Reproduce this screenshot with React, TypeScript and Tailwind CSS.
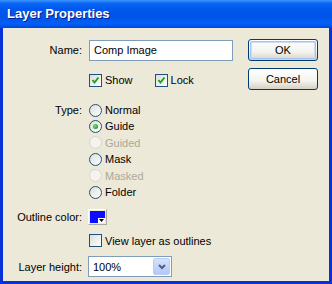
import React from 'react';

const font = "font-['Liberation_Sans',Arial,sans-serif]";

const CheckBox: React.FC<{ checked?: boolean }> = ({ checked }) => (
  <div className="w-[13px] h-[13px] border border-[#1c5180] bg-[linear-gradient(135deg,#dcdcd7,#ffffff)] flex items-center justify-center shrink-0">
    {checked && (
      <svg width="9" height="9" viewBox="0 0 9 9">
        <path d="M1.5 4 L3.5 6.5 L7.5 1.5" fill="none" stroke="#21a121" strokeWidth="2" />
      </svg>
    )}
  </div>
);

const Radio: React.FC<{ checked?: boolean; disabled?: boolean }> = ({ checked, disabled }) => (
  <svg width="13" height="13" viewBox="0 0 13 13" className="shrink-0">
    <defs>
      <linearGradient id="rg" x1="0" y1="0" x2="1" y2="1">
        <stop offset="0" stopColor="#dcdcd7" />
        <stop offset="1" stopColor="#ffffff" />
      </linearGradient>
      <radialGradient id="dot" cx="0.4" cy="0.4" r="0.6">
        <stop offset="0" stopColor="#7de37a" />
        <stop offset="1" stopColor="#21a121" />
      </radialGradient>
    </defs>
    <circle
      cx="6.5"
      cy="6.5"
      r="6"
      fill={disabled ? '#f4f3ee' : 'url(#rg)'}
      stroke={disabled ? '#d8d5c6' : '#1c5180'}
      strokeWidth="1"
    />
    {checked && <circle cx="6.5" cy="6.5" r="2.5" fill="url(#dot)" />}
  </svg>
);

const XpButton: React.FC<{ label: string; isDefault?: boolean }> = ({ label, isDefault }) => (
  <div className="w-[70px] h-[22px] rounded-[3px] border border-[#003c74] bg-[linear-gradient(180deg,#ffffff_0%,#f3f3ef_60%,#d6d0c5_100%)] p-[1px]">
    <div
      className={`w-full h-full rounded-[2px] flex items-center justify-center text-[11px] text-black ${
        isDefault ? 'shadow-[inset_0_0_0_1px_#a9c3f0,inset_0_0_0_2px_#cedcf7]' : ''
      }`}
    >
      {label}
    </div>
  </div>
);

export default function App() {
  const types = [
    { label: 'Normal' },
    { label: 'Guide', checked: true },
    { label: 'Guided', disabled: true },
    { label: 'Mask' },
    { label: 'Masked', disabled: true },
    { label: 'Folder' },
  ];

  return (
    <div className={`w-[332px] h-[284px] flex flex-col bg-[#0831d9] ${font}`}>
      {/* title bar */}
      <div className="h-[28px] shrink-0 flex items-center pl-[7px] bg-[linear-gradient(180deg,#3d95ff_0%,#0a66f4_12%,#0058ee_30%,#0054e6_60%,#0060f8_85%,#0045d8_100%)]">
        <span className="text-white font-bold text-[13px] [text-shadow:1px_1px_0_#0a1c8c] mt-[-1px]">
          Layer Properties
        </span>
      </div>

      {/* body */}
      <div className="flex-1 mx-[3px] mb-[3px] bg-[#ece9d8] flex text-[11px] text-black">
        <div className="flex flex-col pt-[12px]">
          {/* Name */}
          <div className="flex items-center h-[21px]">
            <div className="w-[79px] text-right">Name:</div>
            <div className="ml-[7px] w-[144px] h-[21px] border border-[#7f9db9] bg-white flex items-center pl-[4px]">
              Comp Image
            </div>
          </div>

          {/* Show / Lock */}
          <div className="flex items-center h-[13px] mt-[13px] pl-[86px]">
            <CheckBox checked />
            <span className="ml-[3px]">Show</span>
            <div className="ml-[22px] flex items-center">
              <CheckBox checked />
              <span className="ml-[3px]">Lock</span>
            </div>
          </div>

          {/* Type */}
          <div className="flex mt-[15px]">
            <div className="w-[79px] text-right h-[16px] leading-[16px]">Type:</div>
            <div className="ml-[7px] flex flex-col">
              {types.map((t) => (
                <div key={t.label} className="flex items-center h-[16.4px]">
                  <Radio checked={t.checked} disabled={t.disabled} />
                  <span className={`ml-[3px] ${t.disabled ? 'text-[#aca899]' : ''}`}>{t.label}</span>
                </div>
              ))}
            </div>
          </div>

          {/* Outline color */}
          <div className="flex items-center h-[16px] mt-[9px]">
            <div className="w-[79px] text-right">Outline color:</div>
            <div className="ml-[6px] w-[19px] h-[16px] border border-t-white border-l-white border-r-[#aca899] border-b-[#aca899] p-[1px]">
              <div className="relative w-full h-full bg-[#0c0cff]">
                <div className="absolute right-0 bottom-0 w-[7px] h-[5px] bg-white flex items-center justify-center">
                  <svg width="5" height="3" viewBox="0 0 5 3">
                    <path d="M0 0 H5 L2.5 3 Z" fill="#000" />
                  </svg>
                </div>
              </div>
            </div>
          </div>

          {/* View as outlines */}
          <div className="flex items-center h-[13px] mt-[9px] pl-[86px]">
            <CheckBox />
            <span className="ml-[3px]">View layer as outlines</span>
          </div>

          {/* Layer height */}
          <div className="flex items-center h-[21px] mt-[9px]">
            <div className="w-[79px] text-right">Layer height:</div>
            <div className="ml-[6px] w-[84px] h-[21px] border border-[#7f9db9] bg-white flex items-center">
              <span className="flex-1 pl-[4px]">100%</span>
              <div className="w-[17px] h-[17px] mr-[1px] rounded-[2px] border border-[#b9cdf5] bg-[linear-gradient(180deg,#d6e2fb,#b2c8f6)] flex items-center justify-center">
                <svg width="8" height="6" viewBox="0 0 8 6">
                  <path d="M1 1 L4 4 L7 1" fill="none" stroke="#4d6185" strokeWidth="2" />
                </svg>
              </div>
            </div>
          </div>
        </div>

        {/* buttons */}
        <div className="ml-auto mr-[11px] pt-[11px] flex flex-col gap-[7px]">
          <XpButton label="OK" isDefault />
          <XpButton label="Cancel" />
        </div>
      </div>
    </div>
  );
}
